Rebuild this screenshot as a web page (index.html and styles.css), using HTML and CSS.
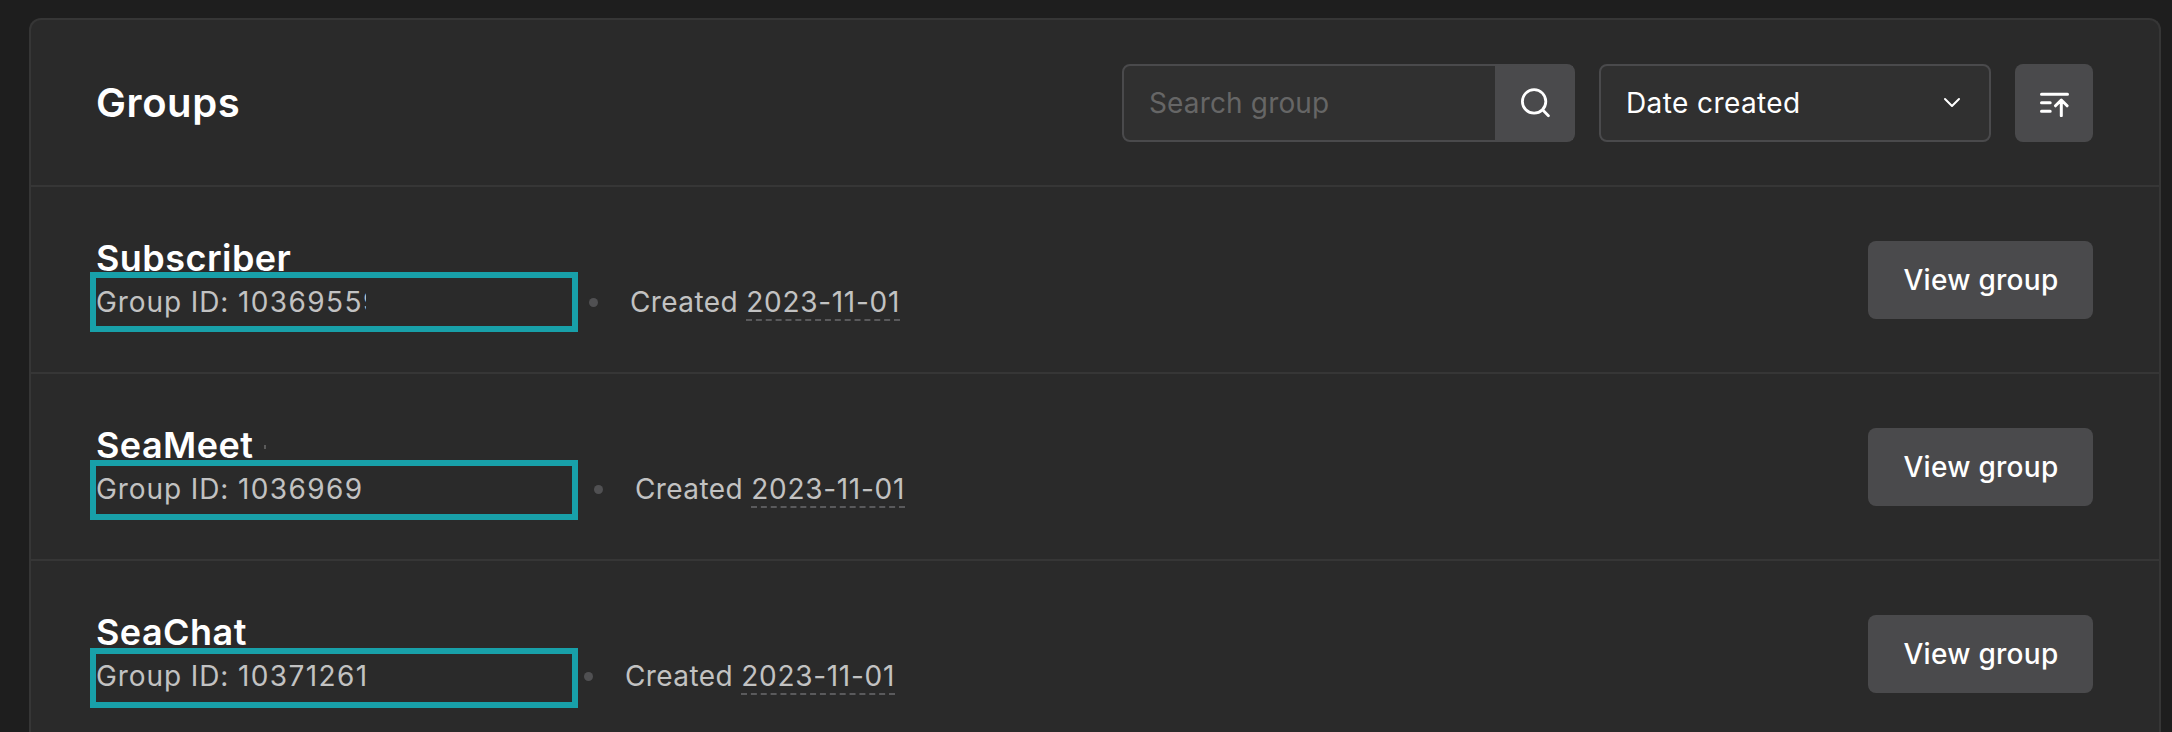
FILE: index.html
```
<!DOCTYPE html>
<html lang="en">
<head>
<meta charset="utf-8">
<title>Groups</title>
<link rel="stylesheet" href="styles.css">
</head>
<body>
<main class="card">
  <header class="header">
    <h1 class="heading">Groups</h1>
    <div class="controls">
      <div class="search">
        <span class="placeholder">Search group</span>
        <button class="search-btn" aria-label="Search"><svg width="32" height="32" viewBox="0 0 32 32" fill="none" stroke="#fff" stroke-width="2.8" stroke-linecap="round"><circle cx="16.1" cy="14.4" r="11.7"/><path d="M24.8 23.1l5.6 5.6"/></svg></button>
      </div>
      <div class="select">
        <span class="select-label">Date created</span>
        <svg width="18" height="12" viewBox="0 0 18 12" fill="none" stroke="#fff" stroke-width="2" stroke-linecap="round" stroke-linejoin="round"><path d="M2 2l7 7 7-7"/></svg>
      </div>
      <button class="sort" aria-label="Sort ascending"><svg width="32" height="28" viewBox="0 0 32 28" fill="none" stroke="#fff" stroke-width="3" stroke-linecap="round" stroke-linejoin="round"><path d="M3.5 5.2h26M3.5 13.8h8.7M3.5 22.2h8.7M23.3 26.7V11.2M17.5 16.8l5.8-5.8 5.8 5.8"/></svg></button>
    </div>
  </header>
  <section class="row">
    <div class="info">
      <h2 class="title">Subscriber</h2>
      <div class="meta"><span class="id-slot id-a"><span class="id clip-a">Group ID: <span class="digits">10369559</span></span></span><i class="dot"></i><span class="created">Created <span class="date">2023-11-01</span></span></div>
      <span class="mark mark-a"></span>
    </div>
    <button class="view">View group</button>
  </section>
  <section class="row">
    <div class="info">
      <h2 class="title">SeaMeet<i class="speck"></i></h2>
      <div class="meta"><span class="id-slot id-b"><span class="id">Group ID: <span class="digits">1036969</span></span></span><i class="dot"></i><span class="created">Created <span class="date">2023-11-01</span></span></div>
      <span class="mark mark-b"></span>
    </div>
    <button class="view">View group</button>
  </section>
  <section class="row row-last">
    <div class="info">
      <h2 class="title">SeaChat</h2>
      <div class="meta"><span class="id-slot id-c"><span class="id">Group ID: <span class="digits">10371261</span></span></span><i class="dot"></i><span class="created">Created <span class="date">2023-11-01</span></span></div>
      <span class="mark mark-c"></span>
    </div>
    <button class="view">View group</button>
  </section>
</main>
</body>
</html>
```
FILE: styles.css
```
* { box-sizing: border-box; }
body {
  margin: 0;
  height: 732px;
  overflow: hidden;
  padding: 18px 11px 0 29px;
  background: #1e1e1e;
  color: #fff;
  font-family: Inter, "Liberation Sans", sans-serif;
}
button { border: 0; padding: 0; color: #fff; font-family: inherit; background: #4a4a4c; display: flex; align-items: center; justify-content: center; }
svg { display: block; }
.card {
  height: 714px;
  background: #2a2a2a;
  border: 2px solid #363636;
  border-bottom: 0;
  border-radius: 12px 12px 0 0;
}
.header {
  height: 165px;
  padding: 1px 66px 0 65px;
  display: flex;
  align-items: center;
  justify-content: space-between;
}
.heading { margin: 0; font-size: 40px; font-weight: 600; line-height: 48px; letter-spacing: .6px; }
.controls { display: flex; }
.search {
  width: 453px;
  height: 78px;
  display: flex;
  align-items: center;
  background: #303030;
  border: 2px solid #4a4a4c;
  border-radius: 8px;
}
.placeholder { flex: 1; padding-left: 25px; font-size: 28px; letter-spacing: .15px; color: #666; }
.search-btn { width: 78px; height: 74px; }
.select {
  width: 392px;
  height: 78px;
  margin: 0 24px;
  padding: 0 28px 0 25px;
  display: flex;
  align-items: center;
  justify-content: space-between;
  background: #303030;
  border: 2px solid #4a4a4c;
  border-radius: 8px;
  font-size: 28px;
  letter-spacing: .4px;
}
.sort { width: 78px; height: 78px; border-radius: 8px; }
.row {
  height: 187px;
  padding: 49px 66px 0 65px;
  border-top: 2px solid #363636;
  display: flex;
  align-items: flex-start;
  justify-content: space-between;
}
.row-last { height: 173px; }
.info { position: relative; }
.title { display: flex; margin: 0; font-size: 36px; line-height: 44px; font-weight: 600; letter-spacing: .45px; }
.meta { display: flex; align-items: center; height: 44px; font-size: 28px; line-height: 36px; color: #c2c2c2; }
.id { display: block; overflow: hidden; white-space: nowrap; letter-spacing: .9px; }
.digits { letter-spacing: 1.4px; }
.clip-a { width: 270px; }
.id-a { width: 493px; }
.id-b { width: 498px; }
.id-c { width: 488px; }
.dot { width: 9px; height: 9px; border-radius: 50%; background: #505052; margin-right: 32px; }
.created { white-space: nowrap; letter-spacing: .4px; }
.date { border-bottom: 2px dashed #5a5a5c; letter-spacing: .7px; }
.speck { width: 2px; height: 4px; margin: 22px 0 0 11px; background: #5a5a5a; }
.mark { position: absolute; left: -6px; width: 488px; height: 60px; border: 6px solid #18a0a9; }
.mark-a { top: 36px; }
.mark-b { top: 37px; }
.mark-c { top: 38px; }
.view { width: 225px; height: 78px; margin-top: 5px; padding-left: 1px; border-radius: 8px; font-size: 28px; font-weight: 500; letter-spacing: .27px; }
```
